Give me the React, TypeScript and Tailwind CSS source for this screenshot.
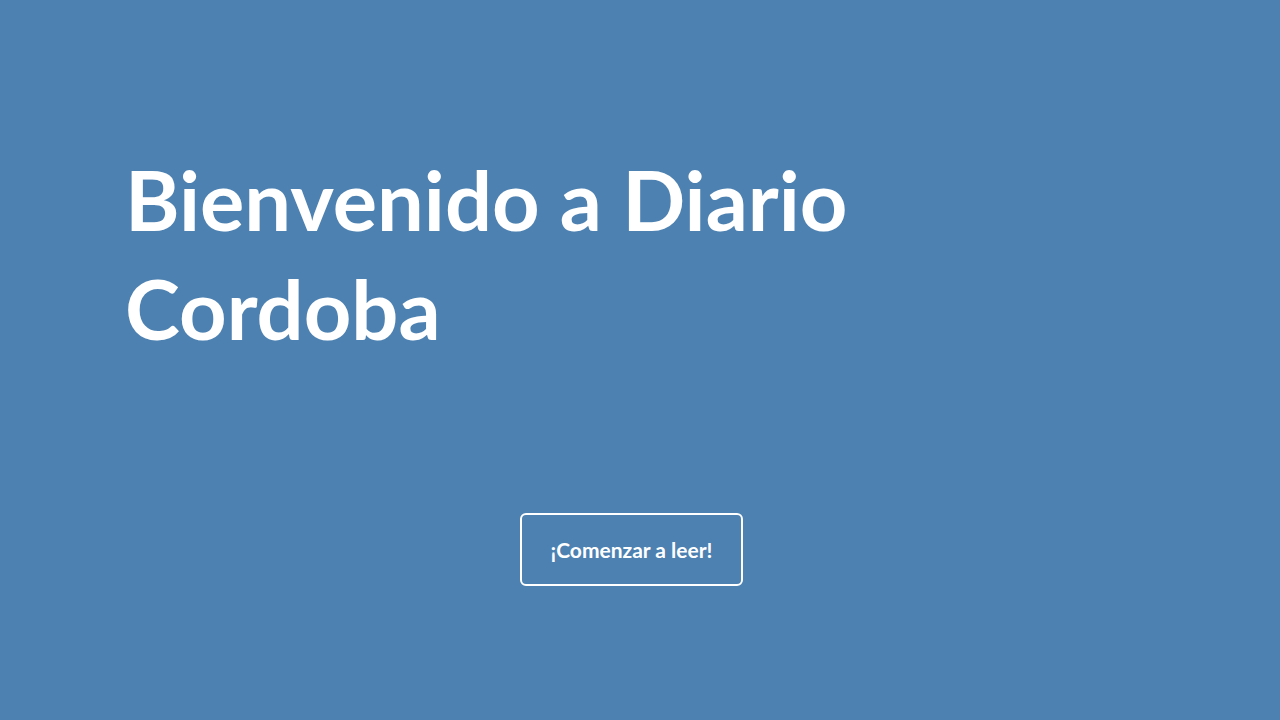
import React from 'react';

const App: React.FC = () => {
  return (
    <main className="min-h-[740px] bg-[#4c81b1] font-['Lato',sans-serif] text-white">
      <section className="flex flex-col pl-[125px] pr-[137px] pt-[145px] pb-[154px]">
        <h1 className="text-[83px] font-bold leading-[109px] max-w-[800px]">
          Bienvenido a Diario Cordoba
        </h1>
        <div className="mt-[150px] flex justify-center">
          <a
            href="#noticias"
            className="-ml-[5px] flex h-[73px] w-[223px] items-center justify-center rounded-md border-2 border-white text-[21px] font-bold"
          >
            ¡Comenzar a leer!
          </a>
        </div>
      </section>
    </main>
  );
};

export default App;
